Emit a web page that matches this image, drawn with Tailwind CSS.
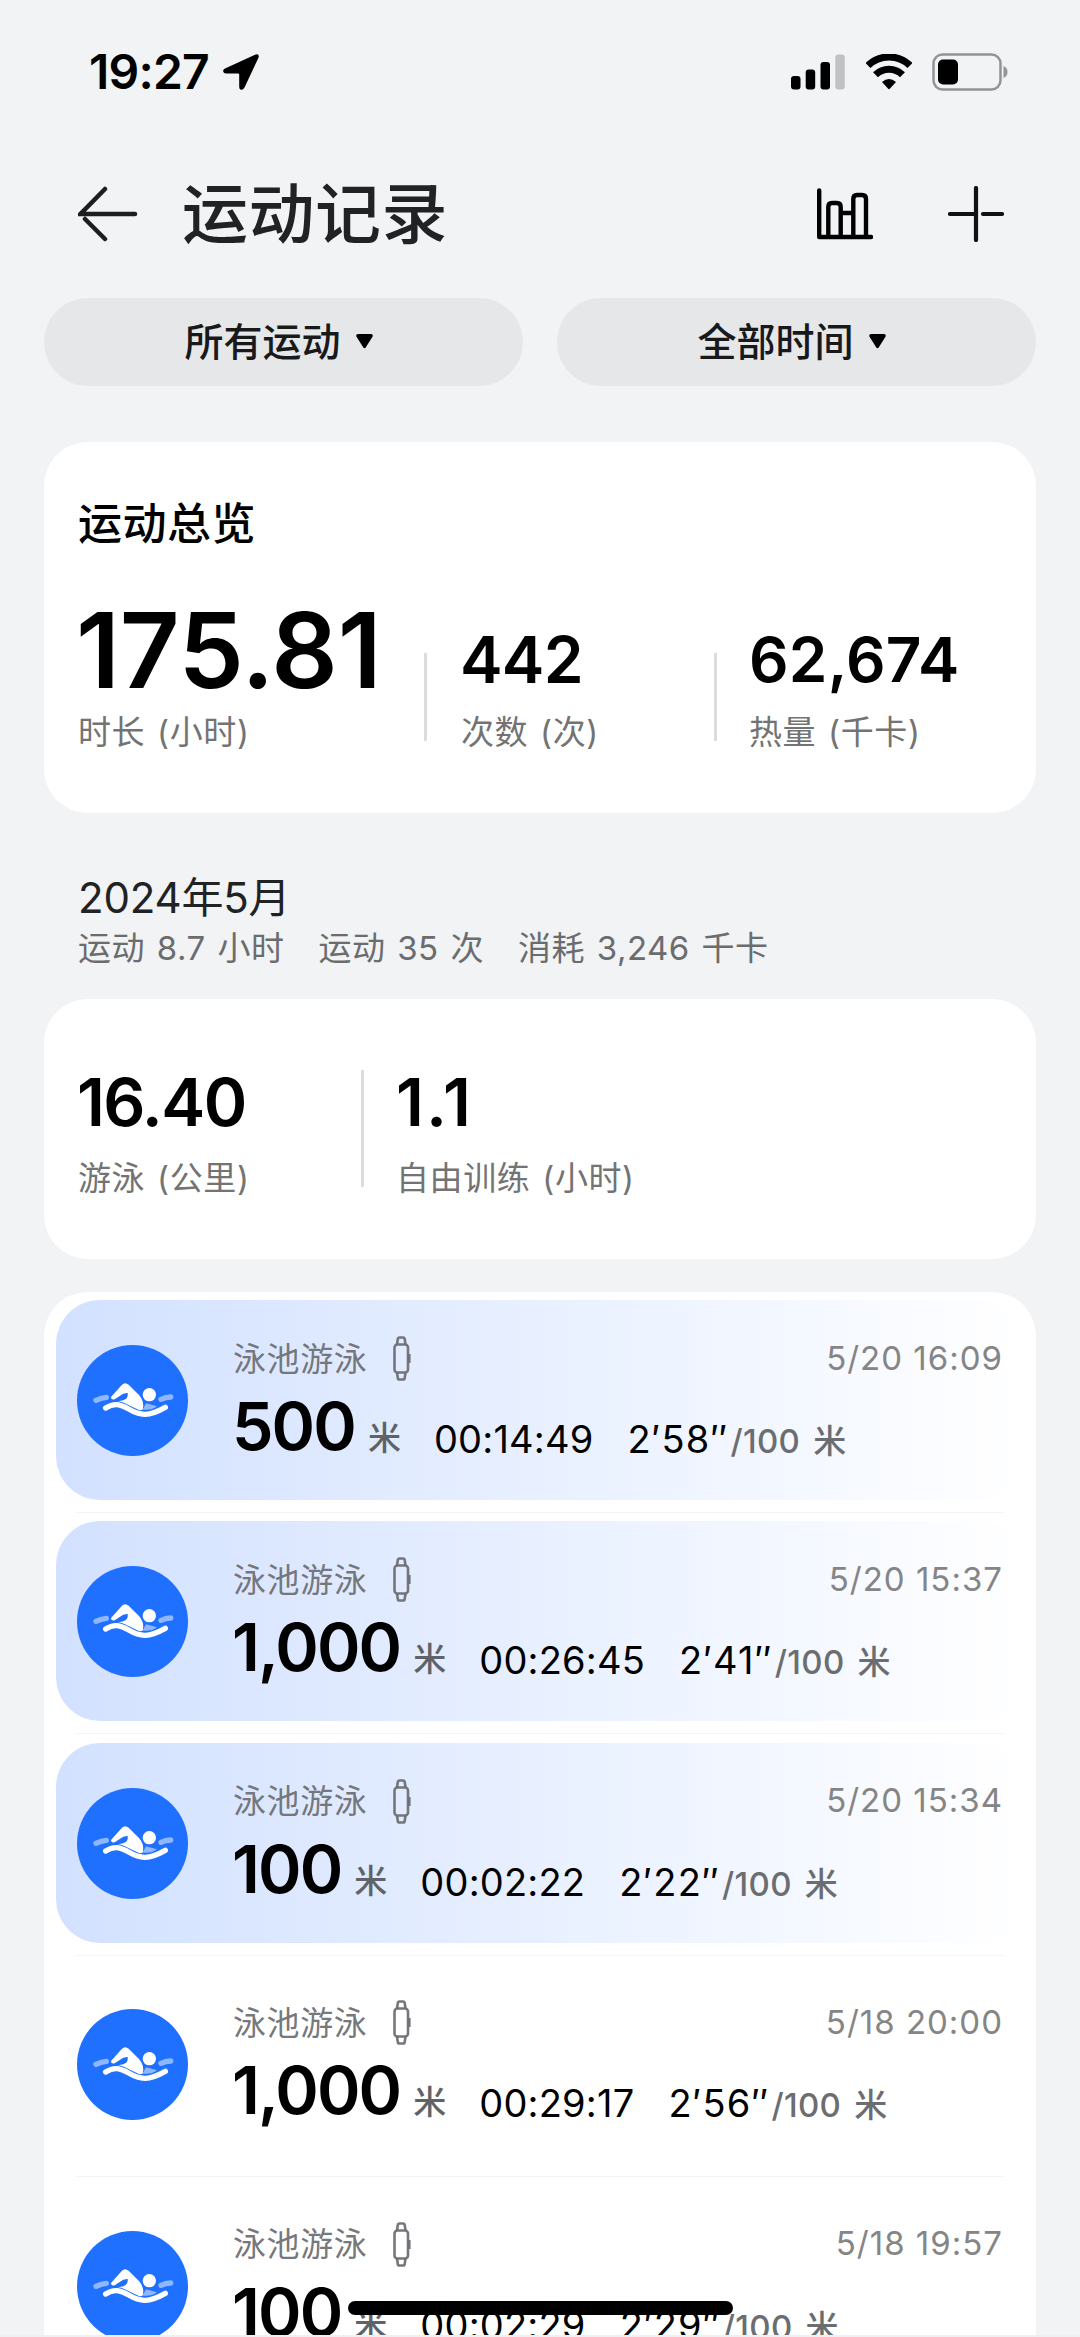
<!DOCTYPE html>
<html lang="zh-CN">
<head>
  <meta charset="UTF-8" />
  <meta name="viewport" content="width=device-width, initial-scale=1.0" />
  <title>运动记录</title>
  <script src="https://cdn.jsdelivr.net/npm/@tailwindcss/browser@4"></script>
</head>
<body class="bg-[#f1f3f5] text-black font-['Inter','Noto_Sans_CJK_SC',sans-serif]">
  <!-- shared icons -->
  <svg class="hidden">
    <symbol id="swim" viewBox="0 0 333 333">
      <circle cx="166.5" cy="166.5" r="166.5" fill="#1f70ff" />
      <path d="M57 166 Q70 159 88 157" fill="none" stroke="#8fb7ff" stroke-width="16" stroke-linecap="round" />
      <path d="M252 163 Q266 156 281 156" fill="none" stroke="#8fb7ff" stroke-width="16" stroke-linecap="round" />
      <path d="M207 175 L240 184 Q224 197 197 194 Z" fill="#8fb7ff" />
      <circle cx="217" cy="149" r="20" fill="#fff" />
      <path d="M102 156 L135 119 Q144 110 155 119 L186 150 Q202 168 198 192 Q192 198 184 194 L142 174 Q132 170 122 168 Q136 169 145 163 Q154 157 152 144 Q140 143 127 154 L113 163 Q102 166 102 156 Z" fill="#fff" />
      <path d="M86 189 C112 172 130 178 155 192 C190 213 215 215 265 187" fill="none" stroke="#fff" stroke-width="16" stroke-linecap="round" />
    </symbol>
    <symbol id="watch" viewBox="0 0 18 45">
      <g fill="none" stroke="currentColor" stroke-width="2.6">
        <rect x="1.5" y="8.5" width="13.5" height="28" rx="3" />
        <path d="M4 8.5 L4.8 3 Q5 1.5 6.5 1.5 H10 Q11.5 1.5 11.7 3 L12.5 8.5 M4 36.5 L4.8 42 Q5 43.5 6.5 43.5 H10 Q11.5 43.5 11.7 42 L12.5 36.5" />
        <path d="M16.3 18 V27" />
      </g>
    </symbol>
  </svg>

  <div class="relative w-[1080px] h-[2337px] overflow-hidden">
    <!-- status bar -->
    <div class="h-36 pl-[89px] pr-[72px] flex items-center justify-between">
      <div class="flex items-center gap-[14px]">
        <span class="text-[48px] leading-[48px] font-semibold tracking-[-0.8px]">19:27</span>
        <svg class="w-9 h-9" viewBox="0 0 36 36"><path d="M32 .8 Q36.5 -.8 35.6 3.5 L21.5 33.5 Q20 36.2 17.8 35.7 Q16.2 35 16.2 33 V20.5 Q16.2 19.5 15.2 19.5 H3 Q.6 19.5 .2 17.5 Q-.2 15.5 2 14.5 Z" /></svg>
      </div>
      <div class="flex items-center">
        <svg class="w-[54px] h-9" viewBox="0 0 54 36">
          <rect x="0" y="22" width="9.5" height="13.5" rx="3" />
          <rect x="14.7" y="15.5" width="9.5" height="20" rx="3" />
          <rect x="29.5" y="8" width="9.5" height="27.5" rx="3" />
          <rect x="44.3" y="0.5" width="9.5" height="35" rx="3" fill="#bfc1c3" />
        </svg>
        <svg class="w-[46px] h-9 ml-[21px]" viewBox="0 0 46 36">
          <path d="M2 11.5 A30 30 0 0 1 44 11.5" fill="none" stroke="#000" stroke-width="7" />
          <path d="M9.5 20.8 A19.3 19.3 0 0 1 36.5 20.8" fill="none" stroke="#000" stroke-width="7" />
          <path d="M16 28 Q23 22 30 28 L23.8 34.8 Q23 35.5 22.2 34.8 Z" />
        </svg>
        <svg class="w-[76px] h-[38px] ml-5" viewBox="0 0 76 38">
          <rect x="1.5" y="1.5" width="67" height="35" rx="9" fill="none" stroke="#939496" stroke-width="2.5" />
          <rect x="6" y="6.5" width="20" height="25" rx="5" />
          <path d="M71.5 13 Q75.5 14.5 75.5 19 Q75.5 23.5 71.5 25 Z" fill="#939496" />
        </svg>
      </div>
    </div>

    <!-- title bar -->
    <div class="h-[140px] pl-[78px] pr-[76px] flex items-center">
      <svg class="w-[60px] h-[56px]" viewBox="0 0 60 56" fill="none" stroke="#1c1e20" stroke-width="4.5" stroke-linecap="round"><path d="M57 28 H2.5 L27 3 M7 33 L27 53" /></svg>
      <h1 class="ml-[44px] text-[66px] leading-[66px] font-medium tracking-[0.5px] text-[#202223]">运动记录</h1>
      <svg class="ml-auto w-14 h-[52px]" viewBox="0 0 56 52" fill="none" stroke="#000" stroke-width="4.4" stroke-linecap="round" stroke-linejoin="round">
        <path d="M2.2 2.5 V49 H54 M11.3 49 V19 Q11.3 15 15 15 H20 Q23.7 15 23.7 19 V49 M23.7 25 H36 M36.3 49 V11 Q36.3 7 40 7 H45 Q49 7 49 11 V49" />
      </svg>
      <svg class="ml-[75px] w-[56px] h-[56px]" viewBox="0 0 56 56" stroke="#111" stroke-width="4.2" stroke-linecap="round"><path d="M2 28 H28 M35 28 H54 M28 2 V54" /></svg>
    </div>

    <!-- filters -->
    <div class="mt-[14px] px-11 flex gap-[34px] text-[39px] leading-[39px] font-medium text-[#18191a]">
      <div class="flex-1 h-[88px] rounded-full bg-[#e6e7e9] flex items-center justify-center gap-[15px] pb-0.5 pr-[10px]">
        所有运动
        <svg class="w-[17px] h-[15px]" viewBox="0 0 17 15"><path d="M2 0 H15 Q18 .5 16 3.5 L10 13 Q8.5 15.5 7 13 L1 3.5 Q-1 .5 2 0 Z" /></svg>
      </div>
      <div class="flex-1 h-[88px] rounded-full bg-[#e6e7e9] flex items-center justify-center gap-[15px] pb-0.5 pr-[10px]">
        全部时间
        <svg class="w-[17px] h-[15px]" viewBox="0 0 17 15"><path d="M2 0 H15 Q18 .5 16 3.5 L10 13 Q8.5 15.5 7 13 L1 3.5 Q-1 .5 2 0 Z" /></svg>
      </div>
    </div>

    <!-- overview -->
    <div class="mx-11 mt-14 h-[371px] rounded-[44px] bg-white pt-[60px] pl-[34px]">
      <h2 class="text-[44px] leading-[44px] font-medium tracking-[0.5px]">运动总览</h2>
      <div class="mt-[52px] flex items-end">
        <div class="w-[346px]">
          <div class="text-[104px] leading-[104px] font-semibold tracking-[-0.2px] -ml-0.5">175.81</div>
          <div class="mt-[13px] text-[33px] leading-[34px] tracking-[0.6px] [word-spacing:2px] text-[#737373]">时长 (小时)</div>
        </div>
        <div class="w-[3px] h-[88px] mb-2 bg-[#dcdcdc]"></div>
        <div class="w-[287px] pl-[34px]">
          <div class="text-[64px] leading-[64px] font-semibold tracking-[-0.8px] -ml-px">442</div>
          <div class="mt-[23px] text-[33px] leading-[34px] tracking-[0.6px] [word-spacing:2px] text-[#737373]">次数 (次)</div>
        </div>
        <div class="w-[3px] h-[88px] mb-2 bg-[#dcdcdc]"></div>
        <div class="pl-[32px]">
          <div class="text-[62px] leading-[64px] font-semibold tracking-[0.2px]">62,674</div>
          <div class="mt-[23px] text-[33px] leading-[34px] tracking-[0.6px] [word-spacing:2px] text-[#737373]">热量 (千卡)</div>
        </div>
      </div>
    </div>

    <!-- month -->
    <div class="mt-16 pl-[78px]">
      <div class="text-[42px] leading-[42px] tracking-[-0.2px] text-[#202223]">2024年5月</div>
      <div class="mt-3 flex gap-[34px] text-[33px] leading-[34px] tracking-[0.5px] [word-spacing:2px] text-[#6a6c6e]">
        <span>运动 8.7 小时</span>
        <span>运动 35 次</span>
        <span>消耗 3,246 千卡</span>
      </div>
    </div>

    <div class="mx-11 mt-[34px] h-[260px] rounded-[44px] bg-white pt-[71px] pl-[34px] flex">
      <div class="w-[283px]">
        <div class="text-[66px] leading-[64px] font-semibold tracking-[-1.6px] -ml-px">16.40</div>
        <div class="mt-[27px] text-[33px] leading-[34px] tracking-[0.6px] [word-spacing:2px] text-[#737373]">游泳 (公里)</div>
      </div>
      <div class="w-[3px] h-[117px] bg-[#dcdcdc]"></div>
      <div class="pl-[32px]">
        <div class="text-[66px] leading-[64px] font-semibold tracking-[2px]">1.1</div>
        <div class="mt-[27px] text-[33px] leading-[34px] tracking-[0.6px] [word-spacing:2px] text-[#737373]">自由训练 (小时)</div>
      </div>
    </div>

    <!-- records -->
    <div id="recordList" class="mx-11 mt-[33px] h-[1200px] rounded-t-[44px] bg-white"></div>

    <!-- home indicator -->
    <div class="absolute left-[348px] top-[2301px] w-[385px] h-[14px] rounded-full bg-black"></div>
    <div class="absolute left-0 bottom-0 w-full h-0.5 bg-[#eff0f2]"></div>
  </div>

  <script>
    const records = [
      { distance: "500", time: "00:14:49", pace: "2′58″", date: "5/20 16:09", isNew: true },
      { distance: "1,000", time: "00:26:45", pace: "2′41″", date: "5/20 15:37", isNew: true },
      { distance: "100", time: "00:02:22", pace: "2′22″", date: "5/20 15:34", isNew: true },
      { distance: "1,000", time: "00:29:17", pace: "2′56″", date: "5/18 20:00", isNew: false },
      { distance: "100", time: "00:02:29", pace: "2′29″", date: "5/18 19:57", isNew: false },
    ];
    const recordList = document.getElementById("recordList");

    records.forEach((r) => {
      const row = document.createElement("div");
      row.className = "h-[221.4px] pt-2 px-3";
      row.innerHTML = `
        <div class="h-[200px] pl-[21px] pr-[21px] rounded-[44px] flex ${r.isNew ? "bg-linear-to-r from-[#d2e1ff] to-white" : ""}">
          <svg class="w-[111px] h-[111px] mt-[45px]"><use href="#swim" /></svg>
          <div class="flex-1 ml-[45px] pt-9">
            <div class="flex items-center h-[45px] text-[33px] leading-[34px] text-[#6e7074]/95 tracking-[0.6px]">
              <span>泳池游泳</span>
              <svg class="w-[18px] h-[45px] ml-[26px]"><use href="#watch" /></svg>
              <span class="ml-auto -mt-0.5 tracking-[1px] text-[#858585]">${r.date}</span>
            </div>
            <div class="mt-3 flex items-end">
              <span class="text-[66px] leading-[66px] font-semibold tracking-[-1.9px] -ml-px">${r.distance}</span>
              <span class="ml-[13px] mb-1 text-[33px] leading-[34px] font-medium text-[#5f6368]">米</span>
              <span class="ml-[33px] mb-px text-[38px] leading-[38px] tracking-[0.2px]">${r.time}</span>
              <span class="ml-[34px] mb-px text-[38px] leading-[38px] tracking-[1.2px]">${r.pace}</span>
              <span class="ml-[2px] mb-px text-[33px] leading-[34px] font-medium tracking-[0.3px] [word-spacing:4px] text-[#6b6d70]">/100 米</span>
            </div>
          </div>
        </div>
        <div class="mt-3 ml-[21px] mr-[21px] h-px bg-[#f3f3f3]"></div>
      `;
      recordList.appendChild(row);
    });
  </script>
</body>
</html>
